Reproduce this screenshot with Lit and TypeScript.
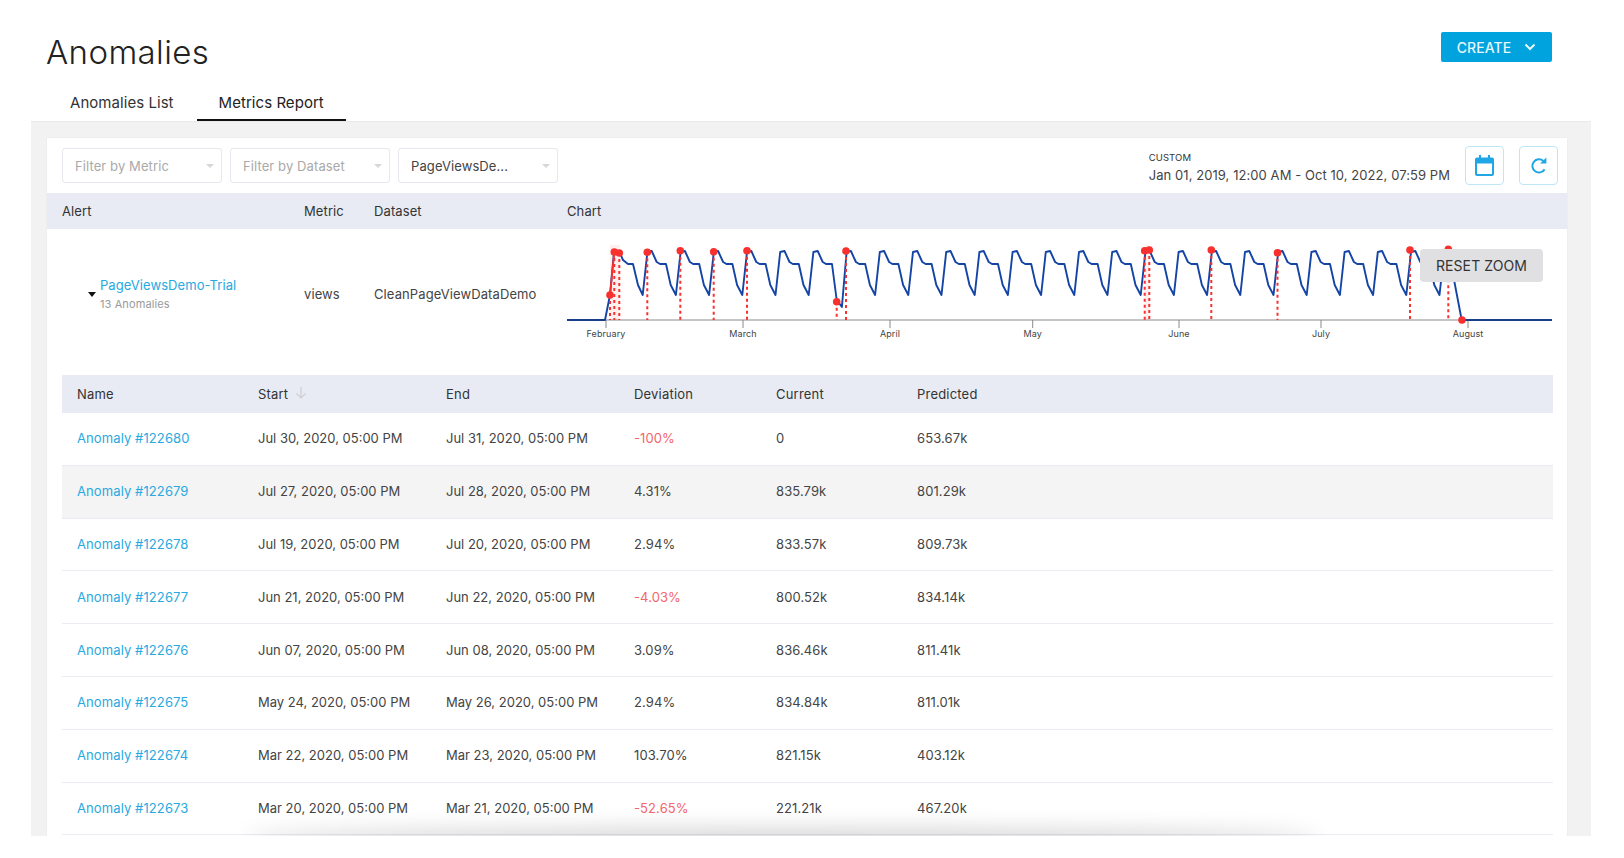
import { LitElement, html, css, svg } from "lit";
import { customElement } from "lit/decorators.js";

const rows = [
  ["Anomaly #122680", "Jul 30, 2020, 05:00 PM", "Jul 31, 2020, 05:00 PM", "-100%", "0", "653.67k"],
  ["Anomaly #122679", "Jul 27, 2020, 05:00 PM", "Jul 28, 2020, 05:00 PM", "4.31%", "835.79k", "801.29k"],
  ["Anomaly #122678", "Jul 19, 2020, 05:00 PM", "Jul 20, 2020, 05:00 PM", "2.94%", "833.57k", "809.73k"],
  ["Anomaly #122677", "Jun 21, 2020, 05:00 PM", "Jun 22, 2020, 05:00 PM", "-4.03%", "800.52k", "834.14k"],
  ["Anomaly #122676", "Jun 07, 2020, 05:00 PM", "Jun 08, 2020, 05:00 PM", "3.09%", "836.46k", "811.41k"],
  ["Anomaly #122675", "May 24, 2020, 05:00 PM", "May 26, 2020, 05:00 PM", "2.94%", "834.84k", "811.01k"],
  ["Anomaly #122674", "Mar 22, 2020, 05:00 PM", "Mar 23, 2020, 05:00 PM", "103.70%", "821.15k", "403.12k"],
  ["Anomaly #122673", "Mar 20, 2020, 05:00 PM", "Mar 21, 2020, 05:00 PM", "-52.65%", "221.21k", "467.20k"],
];

/* Chart coordinates are relative to the svg, whose origin is x=567, y=234 on the page. */
const OX = 567;
const OY = 234;
const px = (x: number) => +(x - OX).toFixed(1);
const py = (y: number) => +(y - OY).toFixed(1);
const BASE = 320;

function seriesPath(): string {
  const pts: [number, number][] = [
    [567, BASE],
    [605, BASE],
    [610, 295],
    [614, 252],
    [619, 251],
    [623, 260],
    [628, 264],
    [633, 264],
    [638, 285],
  ];
  const shape: [number, number][] = [
    [0, 295],
    [4.7, 252],
    [9, 251],
    [14, 262],
    [17.3, 264],
    [23.3, 264],
    [28, 285],
  ];
  const T0 = 642.67;
  const P = 33.2;
  for (let k = 0; k < 25; k++) {
    const t = T0 + P * k;
    if (k === 5) {
      pts.push([t, 295], [t + 4.7, 252], [t + 9, 251], [t + 14, 262], [t + 17.3, 264], [t + 23.3, 264], [t + 28, 300], [t + 33.2, 307]);
      continue;
    }
    if (k === 6) {
      for (const [dx, y] of shape.slice(1)) pts.push([t + dx, y]);
      continue;
    }
    if (k === 24) {
      pts.push([t, 295], [t + 4.7, 252], [t + 9, 251], [1461.7, BASE], [1552, BASE]);
      continue;
    }
    for (const [dx, y] of shape) pts.push([t + dx, y]);
  }
  return pts.map((p, i) => `${i ? "L" : "M"}${px(p[0])} ${py(p[1])}`).join(" ");
}

const marks: [number, number][] = [
  [610, 295], [614.3, 252], [619.3, 253], [647.3, 252.3], [680.3, 250.7], [713.7, 251.7],
  [747, 250.7], [836.7, 301.7], [846, 251], [1144.7, 250.7], [1149.3, 250], [1211.3, 250],
  [1277.5, 252.7], [1410, 250], [1448.3, 249.3], [1462, 320],
];

const ticks: [string, number][] = [
  ["February", 606], ["March", 743], ["April", 890], ["May", 1032.7],
  ["June", 1179], ["July", 1321], ["August", 1468],
];

@customElement("app-root")
export class AppRoot extends LitElement {
  static styles = css`
    :host {
      display: block;
      width: 1624px;
      height: 858px;
      overflow: hidden;
      background: #fff;
      font-family: Inter, "Liberation Sans", sans-serif;
      color: #3a3a3a;
      font-size: 13px;
      letter-spacing: 0.1px;
    }
    .top {
      display: flex;
      justify-content: space-between;
      align-items: flex-start;
      padding: 32px 72px 0 46px;
      height: 84px;
      box-sizing: border-box;
    }
    h1 {
      margin: 0;
      font-size: 33px;
      line-height: 40px;
      font-weight: 300;
      color: #222;
      letter-spacing: 0.4px;
    }
    .create {
      display: flex;
      align-items: center;
      justify-content: center;
      gap: 13px;
      width: 111px;
      height: 30px;
      background: #00a3de;
      color: #e6f6fd;
      border-radius: 2px;
      font-size: 14px;
      font-weight: 500;
    }
    .tabs {
      display: flex;
      gap: 1px;
      height: 37px;
      padding-left: 48px;
      box-sizing: border-box;
    }
    .tab {
      padding: 0 22px;
      font-size: 15px;
      line-height: 38px;
      color: #333;
      height: 37px;
      box-sizing: border-box;
      letter-spacing: 0.05px;
    }
    .tab.active {
      border-bottom: 2px solid #111;
      color: #222;
    }
    .panel {
      position: relative;
      margin: 0 33px 0 31px;
      width: 1560px;
      height: 715px;
      box-sizing: border-box;
      background: #f2f2f3;
      border-top: 1px solid #e9e9ec;
      padding: 16px 24px 0 16px;
      overflow: hidden;
    }
    .card {
      background: #fff;
      height: 800px;
      box-shadow: 0 0 1px #d8d8dc;
    }
    .filters {
      display: flex;
      align-items: center;
      height: 55px;
      padding: 0 9px 0 15px;
      gap: 8px;
    }
    .select {
      flex: none;
      display: flex;
      align-items: center;
      justify-content: space-between;
      width: 160px;
      height: 35px;
      box-sizing: border-box;
      border: 1px solid #e6e8ee;
      border-radius: 3px;
      padding: 0 7px 0 12px;
      font-size: 13px;
      color: #a9a9a9;
    }
    .select.value {
      color: #444;
    }
    .caret {
      width: 0;
      height: 0;
      border-left: 4px solid transparent;
      border-right: 4px solid transparent;
      border-top: 4px solid #d8d8d8;
    }
    .range {
      margin-left: auto;
      margin-right: 7px;
      padding-top: 3px;
      color: #444;
    }
    .range small {
      display: block;
      font-size: 9.5px;
      line-height: 12px;
      color: #333;
      margin-bottom: 3px;
    }
    .range span {
      display: block;
      font-size: 13px;
      line-height: 16px;
      letter-spacing: 0.07px;
    }
    .icon {
      display: flex;
      align-items: center;
      justify-content: center;
      width: 39px;
      height: 39px;
      box-sizing: border-box;
      border: 1px solid #bfe6f8;
      border-radius: 4px;
    }
    .icon + .icon {
      margin-left: 7px;
    }
    .alert-head {
      display: grid;
      grid-template-columns: 242px 70px 193px 1fr;
      align-items: center;
      height: 36px;
      padding-left: 15px;
      background: #e8ebf4;
      font-size: 13px;
      color: #333;
    }
    .alert-row {
      display: grid;
      grid-template-columns: 50px 207px 70px 193px 985px;
      height: 146px;
      position: relative;
    }
    .toggle {
      display: flex;
      justify-content: flex-end;
      padding: 64px 1px 0 0;
    }
    .toggle i {
      width: 0;
      height: 0;
      margin-top: -1px;
      border-left: 4.5px solid transparent;
      border-right: 4.5px solid transparent;
      border-top: 5px solid #111;
    }
    .alert-name {
      padding-top: 47px;
      padding-left: 3px;
    }
    .alert-name a {
      display: block;
      color: #27a9e1;
      font-size: 13px;
      line-height: 18px;
      letter-spacing: 0.07px;
    }
    .alert-name small {
      display: block;
      color: #9a9a9a;
      font-size: 11px;
      line-height: 21px;
    }
    .alert-cell {
      padding-top: 56px;
      line-height: 18px;
      font-size: 13px;
      color: #444;
    }
    .chart {
      position: relative;
      padding-top: 5px;
    }
    .chart svg {
      display: block;
    }
    .reset {
      position: absolute;
      left: 853px;
      top: 20px;
      width: 123px;
      height: 33px;
      display: flex;
      align-items: center;
      justify-content: center;
      background: #e0e0e2;
      border-radius: 4px;
      font-size: 14px;
      color: #333;
      letter-spacing: 0.1px;
    }
    .table {
      margin: 0 14px 0 15px;
    }
    .tr {
      display: grid;
      grid-template-columns: 181px 188px 188px 142px 141px 1fr;
      padding-left: 15px;
      align-items: center;
    }
    .tr.head {
      height: 38px;
      background: #e8ebf4;
      color: #333;
      letter-spacing: 0.2px;
    }
    .tr.body {
      height: 52.8px;
      box-sizing: border-box;
      border-bottom: 1.5px solid #ebebf2;
      color: #444;
      padding-bottom: 1px;
    }
    .tr.body.alt {
      background: #f4f4f5;
    }
    .tr.body a {
      color: #27a9e1;
    }
    .date {
      letter-spacing: 0;
    }
    .neg {
      color: #f4666a;
    }
    .sort {
      display: inline-flex;
      align-items: center;
      gap: 7px;
    }
    .sort svg {
      margin-top: -3px;
    }
    .fade {
      position: absolute;
      left: 222px;
      width: 1060px;
      height: 6px;
      bottom: -6px;
      box-shadow: 0 0 22px 6px rgba(0, 0, 0, 0.2);
      border-radius: 50%;
    }
  `;

  chart() {
    return html`<svg width="985" height="112" viewBox="0 0 985 112">
      <rect x=${px(610)} y=${py(245)} width="10" height=${BASE - 245} fill="#ff0000" opacity="0.06"></rect>
      <rect x=${px(1144.7)} y=${py(245)} width="5" height=${BASE - 245} fill="#ff0000" opacity="0.06"></rect>
      <line x1="0" x2="985" y1=${py(BASE)} y2=${py(BASE)} stroke="#8a8a8a" stroke-width="1"></line>
      ${ticks.map(
        ([label, x]) => svg`
          <line x1=${px(x)} x2=${px(x)} y1=${py(BASE)} y2=${py(328)} stroke="#8a8a8a"></line>
          <text x=${px(x)} y=${py(337)} text-anchor="middle" font-size="9" fill="#444">${label}</text>`
      )}
      <path d=${seriesPath()} fill="none" stroke="#1444a4" stroke-width="1.9" stroke-linejoin="round"></path>
      <line x1=${px(1462)} x2="985" y1=${py(BASE)} y2=${py(BASE)} stroke="#1b3a80" stroke-width="1.6"></line>
      <line x1="0" x2=${px(605)} y1=${py(BASE)} y2=${py(BASE)} stroke="#1b3a80" stroke-width="1.6"></line>
      <path d="M${px(610)} ${py(295)} L${px(614.3)} ${py(252)}" stroke="#f8302e" stroke-width="1.9"></path>
      ${marks.map(
        ([x, y]) => svg`
          <line x1=${px(x)} x2=${px(x)} y1=${py(y)} y2=${py(BASE)} stroke="#f8302e" stroke-width="2" stroke-dasharray="3 3"></line>
          <circle cx=${px(x)} cy=${py(y)} r="3.8" fill="#f8302e"></circle>`
      )}
    </svg>`;
  }

  render() {
    return html`
      <div class="top">
        <h1>Anomalies</h1>
        <div class="create">
          <span>CREATE</span>
          <svg width="12" height="8" viewBox="0 0 12 8"><path d="M1.5 1.5 6 6l4.5-4.5" fill="none" stroke="#e6f6fd" stroke-width="2"></path></svg>
        </div>
      </div>
      <div class="tabs">
        <div class="tab">Anomalies List</div>
        <div class="tab active">Metrics Report</div>
      </div>
      <div class="panel">
        <div class="card">
          <div class="filters">
            <div class="select"><span>Filter by Metric</span><i class="caret"></i></div>
            <div class="select"><span>Filter by Dataset</span><i class="caret"></i></div>
            <div class="select value"><span>PageViewsDe...</span><i class="caret"></i></div>
            <div class="range">
              <small>CUSTOM</small>
              <span>Jan 01, 2019, 12:00 AM - Oct 10, 2022, 07:59 PM</span>
            </div>
            <div class="icon">
              <svg width="19" height="21" viewBox="0 0 19 21">
                <path d="M4 0h2v2.5h7V0h2v2.5h2a2 2 0 0 1 2 2V19a2 2 0 0 1-2 2H2a2 2 0 0 1-2-2V4.5a2 2 0 0 1 2-2h2zM2 8.5V19h15V8.5z" fill="#1ea7e4"></path>
              </svg>
            </div>
            <div class="icon">
              <svg width="18" height="18" viewBox="0 0 18 18">
                <path d="M14.6 12.4A6.6 6.6 0 1 1 13.4 4" fill="none" stroke="#1ea7e4" stroke-width="2"></path>
                <path d="M10 6.6h6.4V.6z" fill="#1ea7e4"></path>
              </svg>
            </div>
          </div>
          <div class="alert-head"><span>Alert</span><span>Metric</span><span>Dataset</span><span>Chart</span></div>
          <div class="alert-row">
            <div class="toggle"><i></i></div>
            <div class="alert-name">
              <a>PageViewsDemo-Trial</a>
              <small>13 Anomalies</small>
            </div>
            <div class="alert-cell">views</div>
            <div class="alert-cell">CleanPageViewDataDemo</div>
            <div class="chart">
              ${this.chart()}
              <div class="reset">RESET ZOOM</div>
            </div>
          </div>
          <div class="table">
            <div class="tr head">
              <span>Name</span>
              <span class="sort">Start
                <svg width="12" height="14" viewBox="0 0 12 14"><path d="M6 1v11M1.5 7.5 6 12l4.5-4.5" fill="none" stroke="#cfcfd4" stroke-width="1.2"></path></svg>
              </span>
              <span>End</span><span>Deviation</span><span>Current</span><span>Predicted</span>
            </div>
            ${rows.map(
              (r, i) => html`<div class="tr body ${i === 1 ? "alt" : ""}">
                <a>${r[0]}</a><span class="date">${r[1]}</span><span class="date">${r[2]}</span>
                <span class=${r[3].startsWith("-") ? "neg" : ""}>${r[3]}</span>
                <span>${r[4]}</span><span>${r[5]}</span>
              </div>`
            )}
          </div>
        </div>
        <div class="fade"></div>
      </div>
    `;
  }
}
